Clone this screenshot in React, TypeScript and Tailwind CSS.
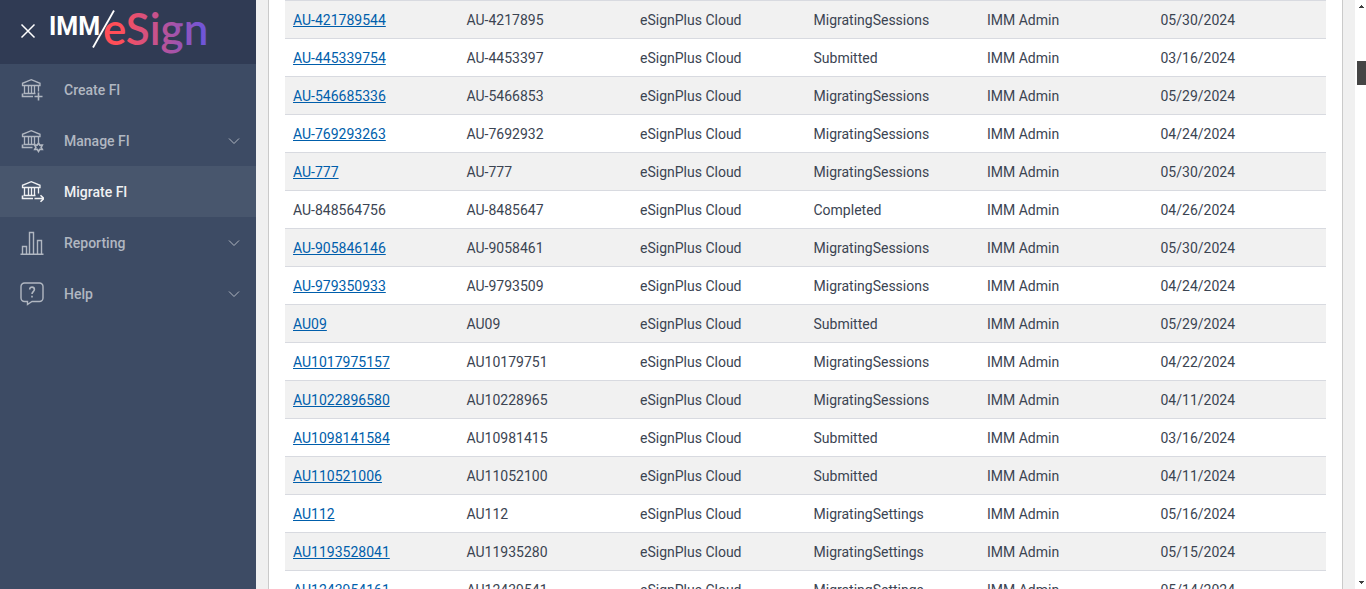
import type { ReactNode } from "react";

type NavItem = Readonly<{
  label: string;
  icon: ReactNode;
  active?: boolean;
  expandable?: boolean;
}>;

type Migration = Readonly<{
  name: string;
  code: string;
  status: string;
  date: string;
  linked?: boolean;
}>;

function BankIcon({ children }: Readonly<{ children: ReactNode }>) {
  return (
    <svg viewBox="0 0 24 24" className="size-6" fill="none" stroke="currentColor" strokeWidth="1.300" aria-hidden="true">
      <path d="M2.500 7.500V5.300L11.300 1.700l8.700 3.600v2.200zM4.500 7.500v8M8.500 7.500v8M11.500 7.500v8M14.500 7.500v8M18.500 7.500v6M3.500 15.500h12" />
      {children}
    </svg>
  );
}

const navItems: NavItem[] = [
  { label: "Create FI", icon: <BankIcon><path strokeWidth="1.600" d="M2.500 15.500v3h10.500M14.500 18.500h8M18.500 14.500v8" /></BankIcon> },
  {
    label: "Manage FI",
    expandable: true,
    icon: (
      <BankIcon>
        <path strokeWidth="1.600" d="M2.500 15.500v3h10" />
        <path strokeWidth="1.600" d="m18.500 14 1.300 2.100 2.500-.1-1.200 2.300 1.200 2.200-2.500-.1-1.300 2.100-1.300-2.100-2.500.1 1.200-2.200-1.200-2.300 2.500.1z" />
      </BankIcon>
    ),
  },
  { label: "Migrate FI", active: true, icon: <BankIcon><path strokeWidth="1.600" d="M2.500 15.500v3h10.500M14.500 18.500h9M20.500 15.200l3.300 3.300-3.300 3.300" /></BankIcon> },
  {
    label: "Reporting",
    expandable: true,
    icon: (
      <svg viewBox="0 0 24 24" className="size-6" fill="none" stroke="currentColor" strokeWidth="1.400" aria-hidden="true">
        <path d="M.5 23.300h23M2.500 23v-7.500h4V23M9.500 23V1.500h4V23M17.500 23V9.500h4V23" />
      </svg>
    ),
  },
  {
    label: "Help",
    expandable: true,
    icon: (
      <svg viewBox="0 0 24 24" className="size-6" fill="none" stroke="currentColor" strokeWidth="1.400" aria-hidden="true">
        <path d="M4.500 1h15a3.500 3.500 0 0 1 3.500 3.500v11.500a3.500 3.500 0 0 1-3.500 3.500h-7.500l-4.500 3v-3h-3A3.500 3.500 0 0 1 1 16V4.500A3.500 3.500 0 0 1 4.500 1z" />
        <path strokeWidth="1.600" d="M9.700 7.500c0-3.200 4.700-3.200 4.700.1 0 2-2.400 2.200-2.400 4.400M12 13.800v1.700" />
      </svg>
    ),
  },
];

const migrations: Migration[] = [
  { name: "AU-421789544", code: "AU-4217895", status: "MigratingSessions", date: "05/30/2024" },
  { name: "AU-445339754", code: "AU-4453397", status: "Submitted", date: "03/16/2024" },
  { name: "AU-546685336", code: "AU-5466853", status: "MigratingSessions", date: "05/29/2024" },
  { name: "AU-769293263", code: "AU-7692932", status: "MigratingSessions", date: "04/24/2024" },
  { name: "AU-777", code: "AU-777", status: "MigratingSessions", date: "05/30/2024" },
  { name: "AU-848564756", code: "AU-8485647", status: "Completed", date: "04/26/2024", linked: false },
  { name: "AU-905846146", code: "AU-9058461", status: "MigratingSessions", date: "05/30/2024" },
  { name: "AU-979350933", code: "AU-9793509", status: "MigratingSessions", date: "04/24/2024" },
  { name: "AU09", code: "AU09", status: "Submitted", date: "05/29/2024" },
  { name: "AU1017975157", code: "AU10179751", status: "MigratingSessions", date: "04/22/2024" },
  { name: "AU1022896580", code: "AU10228965", status: "MigratingSessions", date: "04/11/2024" },
  { name: "AU1098141584", code: "AU10981415", status: "Submitted", date: "03/16/2024" },
  { name: "AU110521006", code: "AU11052100", status: "Submitted", date: "04/11/2024" },
  { name: "AU112", code: "AU112", status: "MigratingSettings", date: "05/16/2024" },
  { name: "AU1193528041", code: "AU11935280", status: "MigratingSettings", date: "05/15/2024" },
  { name: "AU1243954161", code: "AU12439541", status: "MigratingSettings", date: "05/14/2024" },
];

function Logo() {
  return (
    <svg viewBox="0 0 160 56" className="h-14 w-40" role="img" aria-label="IMM eSign">
      <defs>
        <linearGradient id="esign" gradientUnits="userSpaceOnUse" x1="56" y1="0" x2="158" y2="0">
          <stop offset="0.150" stopColor="#ff4e58" />
          <stop offset="0.500" stopColor="#c8528c" />
          <stop offset="1" stopColor="#6b56dc" />
        </linearGradient>
      </defs>
      <text x="1" y="35" fill="#fff" fontSize="25" className="font-[Roboto,sans-serif] font-bold">IMM</text>
      <path d="M45 47.500 66 10.500" stroke="#fff" strokeWidth="1.800" />
      <text x="55" y="45" fill="url(#esign)" fontSize="44" className="font-[Lato,sans-serif] font-semibold">eSign</text>
    </svg>
  );
}

function Sidebar() {
  return (
    <aside className="w-64 shrink-0 bg-[#3d4b64]">
      <div className="flex h-16 items-start bg-[#303b54] pl-5">
        <button type="button" aria-label="Close menu" className="mt-[23px] mr-3 text-white">
          <svg viewBox="0 0 16 16" className="size-4" stroke="currentColor" strokeWidth="1.500" aria-hidden="true">
            <path d="m1.500 1.500 13 13M14.500 1.500l-13 13" />
          </svg>
        </button>
        <Logo />
      </div>
      <nav>
        {navItems.map((item) => (
          <a key={item.label} href="#" className={`flex h-[51px] items-center pr-4 pl-5 text-sm font-medium ${item.active ? "bg-[#48566d] text-[#f0f1f3]" : "text-[#b1b7c1]"}`}>
            {item.icon}
            <span className="ml-5 flex-1">{item.label}</span>
            {item.expandable ? (
              <svg viewBox="0 0 12 12" className="size-3" fill="none" stroke="currentColor" aria-hidden="true">
                <path d="m1 3.500 5 5 5-5" />
              </svg>
            ) : null}
          </a>
        ))}
      </nav>
    </aside>
  );
}

function MigrationTable() {
  return (
    <table className="w-full table-fixed border-collapse text-left text-sm text-[#3b4452]">
      <tbody>
        {migrations.map((row) => (
          <tr key={row.name} className="h-[38px] border-y border-[#d8dae0] odd:bg-[#f1f1f1]">
            <td className="px-2">
              {row.linked === false ? row.name : <a href="#" className="text-[#005eab] underline">{row.name}</a>}
            </td>
            <td className="px-2">{row.code}</td>
            <td className="px-2">eSignPlus Cloud</td>
            <td className="px-2">{row.status}</td>
            <td className="px-2">IMM Admin</td>
            <td className="px-2">{row.date}</td>
          </tr>
        ))}
      </tbody>
    </table>
  );
}

function ScrollRail() {
  return (
    <div className="flex w-[11px] shrink-0 flex-col items-end bg-white text-[#404040]" aria-hidden="true">
      <svg viewBox="0 0 9 9" className="mt-0.5 size-[9px]" fill="currentColor"><path d="M2 6V5h1V4h1V3h1v1h1v1h1v1z" /></svg>
      <div className="mt-[50px] h-6 w-[9px] bg-[#454545]" />
      <svg viewBox="0 0 9 9" className="mt-auto mb-0.5 size-[9px]" fill="currentColor"><path d="M2 3h5v1H6v1H5v1H4V5H3V4H2z" /></svg>
    </div>
  );
}

export default function App() {
  return (
    <div className="flex h-screen overflow-hidden bg-[#f0f0f0] font-[Roboto,sans-serif]">
      <Sidebar />
      <main className="min-w-0 flex-1 overflow-hidden px-3">
        <div className="border-x border-[#cacaca] bg-white px-4">
          <MigrationTable />
        </div>
      </main>
      <ScrollRail />
    </div>
  );
}
